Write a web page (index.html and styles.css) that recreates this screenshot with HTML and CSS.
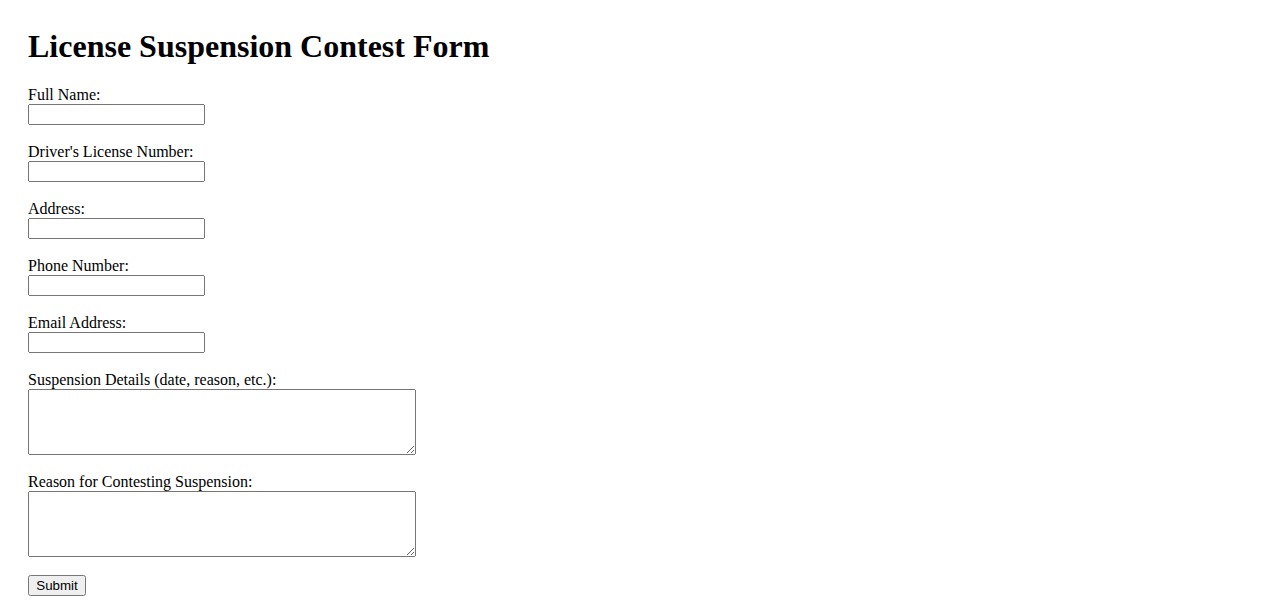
FILE: index.html
```html
<!DOCTYPE html>
<html>
<head>
<meta charset="utf-8">
<title>License Suspension Contest Form</title>
<link rel="stylesheet" href="styles.css">
</head>
<body>
<div class="page">
<h1 class="title">License Suspension Contest Form</h1>
<form class="form">
<div class="group">
<label for="name" class="label">Full Name:</label>
<input type="text" id="name" class="field">
</div>
<div class="group">
<label for="license" class="label">Driver's License Number:</label>
<input type="text" id="license" class="field">
</div>
<div class="group">
<label for="address" class="label">Address:</label>
<input type="text" id="address" class="field">
</div>
<div class="group">
<label for="phone" class="label">Phone Number:</label>
<input type="text" id="phone" class="field">
</div>
<div class="group">
<label for="email" class="label">Email Address:</label>
<input type="text" id="email" class="field">
</div>
<div class="group">
<label for="details" class="label">Suspension Details (date, reason, etc.):</label>
<textarea id="details" class="area" rows="4"></textarea>
</div>
<div class="group">
<label for="reason" class="label">Reason for Contesting Suspension:</label>
<textarea id="reason" class="area" rows="4"></textarea>
</div>
<button type="submit" class="submit">Submit</button>
</form>
</div>
</body>
</html>
```
FILE: styles.css
```css
body {
  margin: 8px;
  font-family: "Liberation Serif", "Times New Roman", serif;
  font-size: 16px;
  color: #000;
  background: #fff;
}
.page {
  padding: 20px;
}
.title {
  font-size: 32px;
  font-weight: bold;
  margin: 0 0 21.44px 0;
}
.group {
  margin-bottom: 18px;
}
.label {
  display: block;
}
.field {
  display: block;
  box-sizing: border-box;
  width: 177px;
  height: 21px;
  margin: 0;
  font-family: "Liberation Sans", Arial, sans-serif;
  font-size: 13.33px;
}
.area {
  display: block;
  box-sizing: border-box;
  width: 388px;
  height: 66px;
  margin: 0;
  font-family: "Liberation Mono", monospace;
  font-size: 13.33px;
}
.submit {
  display: block;
  box-sizing: border-box;
  width: 58px;
  height: 21px;
  margin: 0;
  padding: 0;
  font-family: "Liberation Sans", Arial, sans-serif;
  font-size: 13.33px;
}
```
